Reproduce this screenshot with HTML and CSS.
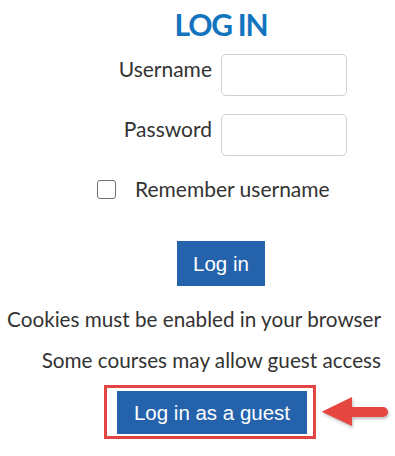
FILE: index.html
```html
<!DOCTYPE html>
<html>
<head>
<meta charset="utf-8">
<link rel="stylesheet" href="styles.css">
</head>
<body>
<div class="page">
  <h1 class="title">LOG IN</h1>
  <div class="fields">
    <label class="label" for="u">Username</label>
    <input class="field" id="u" type="text">
    <label class="label" for="p">Password</label>
    <input class="field" id="p" type="password">
  </div>
  <div class="remember">
    <input class="check" type="checkbox" id="r">
    <label for="r" class="remember-text">Remember username</label>
  </div>
  <button class="btn btn-login">Log in</button>
  <p class="note note-cookies">Cookies must be enabled in your browser</p>
  <p class="note note-guest">Some courses may allow guest access</p>
  <div class="guest-row">
    <div class="highlight">
      <button class="btn btn-guest">Log in as a guest</button>
    </div>
    <svg class="arrow" width="74" height="34" viewBox="0 0 74 34">
      <path d="M3.7 16.7 L34 2 L34 12 L65 12 A5 5 0 0 1 65 22 L34 22 L34 31 Z" fill="#e5463f"/>
    </svg>
  </div>
</div>
</body>
</html>
```
FILE: styles.css
```css
* { box-sizing: border-box; }
html, body { margin: 0; padding: 0; background: #fff; }
body {
  font-family: Lato, "Open Sans", sans-serif;
  color: #333;
  font-size: 21px;
  line-height: 24px;
}
.page { width: 395px; padding-top: 6px; }
.title {
  margin: 0;
  padding-left: 47px;
  text-align: center;
  font-size: 30px;
  line-height: 36px;
  font-weight: 700;
  letter-spacing: -1.2px;
  color: #1273bf;
}
.fields {
  margin-top: 12px;
  display: grid;
  grid-template-columns: 212px 126px;
  column-gap: 9px;
  row-gap: 18px;
  align-items: start;
}
.label { text-align: right; padding-top: 3px; }
.field {
  width: 126px;
  height: 42px;
  border: 1px solid #cfcfcf;
  border-radius: 5px;
  background: #fff;
  margin: 0;
}
.remember {
  margin-top: 21px;
  padding-left: 97px;
  display: flex;
  align-items: center;
  gap: 19px;
}
.check {
  appearance: none;
  -webkit-appearance: none;
  margin: 0;
  width: 19px;
  height: 19px;
  border: 1.5px solid #707070;
  border-radius: 3px;
  background: #fff;
}
.btn {
  display: block;
  border: 0;
  border-radius: 0;
  background: #2463ac;
  color: #fff;
  font-family: "Liberation Sans", Arial, sans-serif;
  font-size: 20.5px;
  line-height: 23px;
  padding: 11px 16px;
}
.btn-login { margin: 40px 0 0 177px; width: 88px; }
.note { margin: 0; text-align: right; padding-right: 14px; font-size: 20.7px; }
.note-cookies { margin-top: 21px; }
.note-guest { margin-top: 17px; }
.guest-row {
  margin-top: 13px;
  padding-left: 104px;
  display: flex;
  align-items: center;
  gap: 2px;
}
.highlight {
  border: 3px solid #e24444;
  padding: 3px 6px 2px 10px;
}
.btn-guest { width: 190px; padding: 10px 0; text-align: center; }
.arrow { display: block; filter: drop-shadow(1px 2px 1.5px rgba(0,0,0,0.25)); }
```
